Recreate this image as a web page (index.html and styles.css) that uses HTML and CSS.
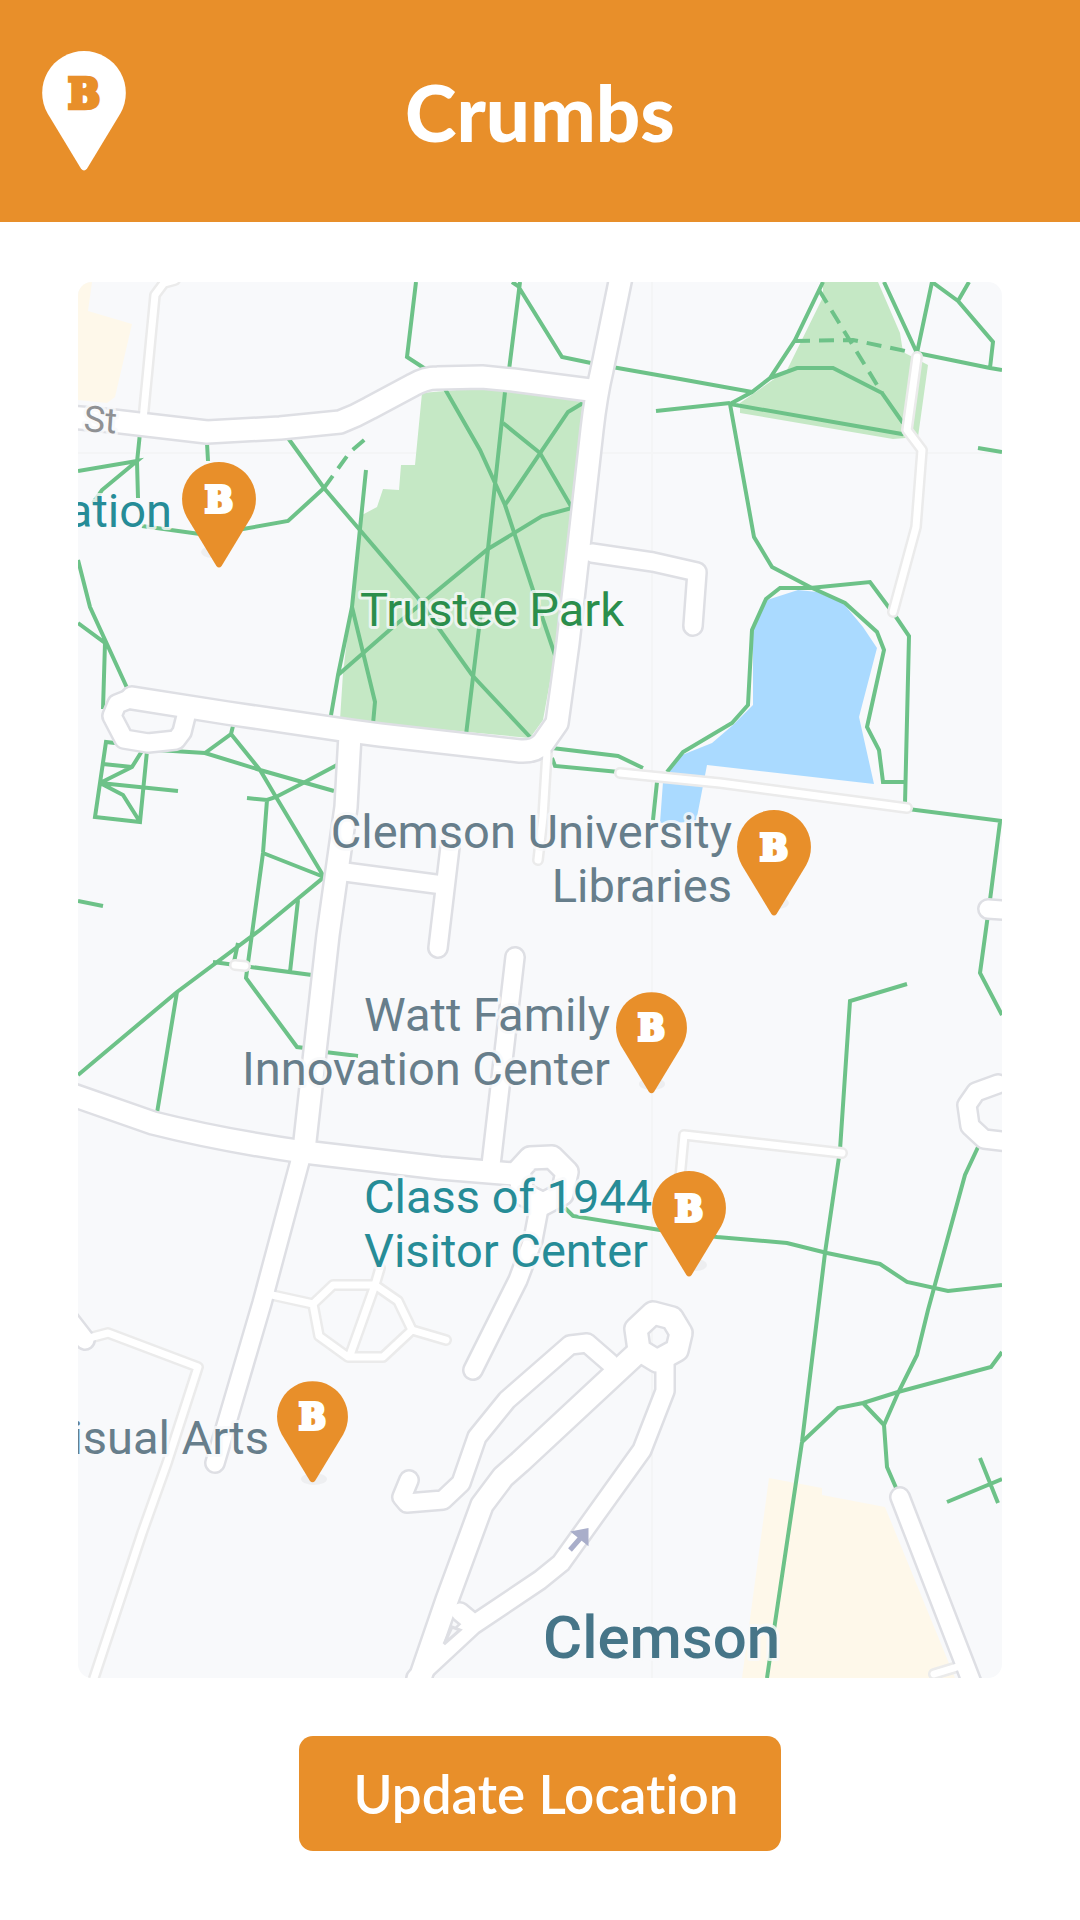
FILE: index.html
```html
<!DOCTYPE html>
<html lang="en">
<head>
    <meta charset="UTF-8">
    <meta name="viewport" content="width=device-width, initial-scale=1.0">
    <title>Crumbs</title>
    <link rel="stylesheet" href="styles.css">
</head>
<body>
    <header class="header">
        <a class="logo" href="#" aria-label="Home">
            <svg viewBox="0 0 74 106">
                <path class="logo-shape" d="M37 0a37 37 0 0 1 32 55.5L39.6 104q-2.6 3-5.2 0L5 55.5A37 37 0 0 1 37 0z"/>
                <text class="logo-letter" x="37" y="50">B</text>
            </svg>
        </a>
        <h1>Crumbs</h1>
    </header>

    <main class="content">
        <svg class="map" viewBox="78 282 924 1396" role="group" aria-label="Campus map">
            <defs>
                <symbol id="pin" viewBox="0 0 74 106">
                    <path class="pin-shape" d="M37 0a37 37 0 0 1 32 55.5L39.6 104q-2.6 3-5.2 0L5 55.5A37 37 0 0 1 37 0z"/>
                    <text class="pin-letter" x="37" y="50">B</text>
                </symbol>

                <g id="roads-wide">
                    <path d="M70 417L113 421L207 432L280 428L340 422Q356 416 370 408L413 385Q425 378 437 378L482 377L513 380L590 390"/>
                    <path d="M622 272L602 370Q596 395 592 430L580 537L568 643L557 723L543 743Q535 752 520 751L380 735L350 731L227 713L132 698"/>
                    <path d="M350 735L346 807L328 935L304 1150"/>
                    <path d="M70 1094L153 1123Q220 1140 304 1152L440 1168L513 1174"/>
                    <path d="M635 1355L520 1462L503 1477L482 1505L447 1600L416 1690"/>
                    <path d="M519 1170L530 1158L552 1157L567 1172L562 1194L543 1204L523 1194Z"/>
                    <path d="M653 1313L672 1318L681 1333L677 1350L657 1361L639 1350L636 1329Z"/>
                </g>
                <g id="roads-mid">
                    <path d="M186 716L182 732L176 740L148 743L124 739L112 716L117 704L132 698"/>
                    <path d="M303 1150L262 1303L215 1463"/>
                    <path d="M345 872L443 885M450 847L438 948"/>
                    <path d="M515 957L491 1165"/>
                    <path d="M592 553L653 562L697 572L693 626"/>
                    <path d="M540 1203L533 1240L518 1280L473 1370"/>
                    <path d="M68 1318L85 1340"/>
                    <path d="M409 1480L402 1497L407 1503L443 1500L461 1483L477 1437L507 1400L570 1345L587 1343L610 1363"/>
                    <path d="M665 1363L665 1391L642 1450L561 1563L540 1580L473 1625L416 1678"/>
                    <path d="M900 1497L974 1688"/>
                    <path d="M998 1084L976 1092L967 1105L970 1126L984 1139L1010 1142"/>
                    <path d="M988 909L1015 911"/>
                    <path d="M460 1612L472 1622"/>
                </g>
                <g id="roads-minor">
                    <path d="M175 280L164 283L155 295L143 420"/>
                    <path d="M547 752L543 817L538 860"/>
                    <path d="M620 773L720 783L907 808"/>
                    <path d="M917 357L907 430L922 450L916 527L893 612"/>
                    <path d="M678 1200L684 1135L842 1153"/>
                    <path d="M272 1295L313 1304L333 1285L375 1285L398 1301L412 1330L383 1357L348 1357L319 1336L313 1304M380 1268L375 1285L350 1355M412 1330L446 1340"/>
                    <path d="M93 1337L108 1333L198 1367L167 1463L142 1533L92 1684"/>
                    <path d="M934 1674L957 1667"/>
                    <path d="M235 965L245 966"/>
                </g>
            </defs>

            <rect class="land" x="78" y="282" width="924" height="1396"/>
            <path class="seam" d="M652 282V1678M78 453H1002"/>

            <!-- areas -->
            <path class="building" d="M78 282H92L88 311L132 324L115 397L107 403L78 400z"/>
            <path class="building" d="M769 1478L822 1488V1495L885 1507L955 1678H742z"/>
            <path class="park" d="M422 393L480 388L583 401L563 587L557 643L543 720L530 738L340 720L343 673L362 515L377 507L383 489L399 490L401 465H415z"/>
            <path class="park" d="M823 282H878L900 333L903 352L928 365L918 437L893 439L740 413V403L787 370L823 297z"/>
            <path class="water" d="M798 590L767 600L753 630V705L733 725L712 743L682 755L667 775L663 782L660 823L696 822L707 765L874 784L859 717L877 648L863 627L843 603L817 592z"/>

            <!-- foot paths -->
            <g class="paths">
                <path d="M140 433L137 462L138 498M78 471L137 461L102 490L93 503"/>
                <path d="M207 443L208 461M142 526L207 535L243 529L288 521L324 488"/>
                <path d="M288 438L324 488L418 598L440 630L472 675L530 737"/>
                <path d="M366 470L352 607L338 675L330 721M352 607L375 702L373 724"/>
                <path d="M338 675L393 627L488 549L542 516L572 508L540 453L503 423"/>
                <path d="M78 560L90 607L128 690M78 623L105 643L103 709"/>
                <path d="M416 282L407 357L427 370M512 282L518 286L562 357L591 363M520 282L509 370"/>
                <path d="M505 392L483 595L466 735M445 389L480 450L505 505L533 590L556 658M583 403L568 412L505 505"/>
                <path d="M612 367L680 379L752 392M656 411L730 403"/>
                <path d="M823 282L795 340L770 378L752 392L730 404M770 378L797 368H833L882 393L903 423M730 404L902 434L907 429"/>
                <path d="M884 282L917 353L932 282L958 301L993 342L990 368M958 301L969 282M917 353L990 368L1002 370M978 448L1002 452"/>
                <path d="M730 404L754 537L772 567L810 587L845 603L877 632L884 650L867 727L879 750L883 782H905"/>
                <path d="M667 772L683 752L732 723L748 705L752 630L766 599L780 588H810L870 582L890 609M894 614L909 636L905 804"/>
                <path d="M908 809L1002 821M1000 822L990 900L980 973L1002 1015M657 782L653 820"/>
                <path d="M552 748L618 756L643 768M552 758L555 766L619 772"/>
                <path d="M115 743L106 742L95 817L140 822L147 751H142L132 767L100 783M103 764L132 767M100 783L123 795L140 822M100 783L178 791"/>
                <path d="M157 750L205 753L260 770L334 791M205 753L231 734L233 726M231 734L260 770L276 797L324 877"/>
                <path d="M337 765L305 782L276 797L267 800L247 798M267 800L263 853L248 963L246 978L297 1047L305 1048M263 853L324 877L260 930L177 992L78 1075"/>
                <path d="M298 900L290 972M78 901L103 906M213 962L312 975M238 943L234 962M325 1052L358 1056M177 992L157 1113"/>
                <path d="M907 984L850 1001L840 1150M839 1157L825 1253L802 1442L775 1623L767 1678"/>
                <path d="M565 1208L573 1216L660 1230L717 1237L787 1243L827 1253L880 1264L907 1282L948 1291L1002 1285"/>
                <path d="M979 1145L965 1175L928 1310L917 1355L898 1393L884 1425L887 1467L897 1490"/>
                <path d="M802 1442L838 1408L863 1403L898 1392L991 1367L1002 1352M863 1403L884 1425M947 1502L1002 1479M980 1458L998 1503"/>
            </g>
            <g class="paths dashed">
                <path d="M324 488L350 452L370 435"/>
                <path d="M819 290L882 393M795 341L853 340L915 353"/>
            </g>

            <!-- roads, edges first and then the white surface -->
            <use href="#roads-minor" class="minor-edge"/>
            <use href="#roads-mid" class="mid-edge"/>
            <use href="#roads-wide" class="wide-edge"/>
            <use href="#roads-minor" class="minor-road"/>
            <use href="#roads-mid" class="mid-road"/>
            <use href="#roads-wide" class="wide-road"/>
            <path class="island" d="M452 1627L460 1630L444 1644z"/>
            <path class="arrow" d="M570 1550L584 1534M576 1533L586 1531L586 1541z"/>

            <g class="labels">
                <text class="street" x="83" y="431" transform="rotate(4 83 431)">St</text>
                <text class="visitor end" x="172" y="527">ation</text>
                <text class="green" x="360" y="626">Trustee Park</text>
                <text class="place end" x="732" y="848">Clemson University</text>
                <text class="place end" x="732" y="902">Libraries</text>
                <text class="place end" x="610" y="1031">Watt Family</text>
                <text class="place end" x="610" y="1085">Innovation Center</text>
                <text class="visitor" x="364" y="1213">Class of 1944</text>
                <text class="visitor" x="364" y="1267">Visitor Center</text>
                <text class="place end" x="269" y="1454">isual Arts</text>
                <text class="city" x="543" y="1658">Clemson</text>
            </g>

            <g class="shadows">
                <ellipse cx="212" cy="552" rx="11" ry="6"/>
                <ellipse cx="778" cy="903" rx="11" ry="6"/>
                <ellipse cx="652" cy="1084" rx="13" ry="6"/>
                <ellipse cx="696" cy="1265" rx="11" ry="6"/>
                <ellipse cx="314" cy="1479" rx="13" ry="6"/>
            </g>
            <a href="#" aria-label="Station"><use href="#pin" x="182" y="462" width="74" height="106"/></a>
            <a href="#" aria-label="Clemson University Libraries"><use href="#pin" x="737" y="810" width="74" height="106"/></a>
            <a href="#" aria-label="Watt Family Innovation Center"><use href="#pin" x="616" y="992" width="71" height="102"/></a>
            <a href="#" aria-label="Class of 1944 Visitor Center"><use href="#pin" x="652" y="1171" width="74" height="106"/></a>
            <a href="#" aria-label="Visual Arts"><use href="#pin" x="277" y="1381" width="71" height="102"/></a>
        </svg>

        <button class="update" type="button">Update Location</button>
    </main>
</body>
</html>
```
FILE: styles.css
```css
* {
    box-sizing: border-box;
}
body {
    font-family: Futura, 'Lato', sans-serif;
    margin: 0;
    background: #fff;
}
.header {
    display: grid;
    grid-template-columns: 1fr auto 1fr;
    align-items: start;
    padding: 51px 42px;
    background: #e88f2a;
    color: #fff;
}
.logo {
    width: 84px;
    height: 120px;
}
.logo svg {
    display: block;
    width: 100%;
    height: 100%;
}
.logo-shape {
    fill: #fff;
}
h1 {
    grid-column: 2;
    margin: 16px 0 0;
    font-family: Futura, 'Lato Black', 'Lato', sans-serif;
    font-size: 78px;
    font-weight: 900;
    line-height: 90px;
}
.content {
    display: flex;
    flex-direction: column;
    align-items: center;
    gap: 58px;
    padding: 60px 78px;
}
.map {
    display: block;
    width: 100%;
    border-radius: 14px;
}
.update {
    padding: 24px 42px 24px 54px;
    border: none;
    border-radius: 14px;
    background: #e88f2a;
    color: #fff;
    font-family: Futura, 'Lato Semibold', 'Lato', sans-serif;
    font-size: 53px;
    font-weight: 600;
    font-variant-ligatures: none;
    line-height: 67px;
    cursor: pointer;
}

/* map surfaces */
.land {
    fill: #f8f9fb;
}
.seam {
    stroke: #f4f5f6;
    stroke-width: 2;
}
.building {
    fill: #fef8ea;
}
.park {
    fill: #c5e8c5;
}
.water {
    fill: #aadaff;
}
.paths {
    fill: none;
    stroke: #6dc288;
    stroke-width: 4;
}
.dashed {
    stroke-dasharray: 15 9;
}

/* roads */
.wide-edge, .mid-edge, .minor-edge,
.wide-road, .mid-road, .minor-road {
    fill: none;
    stroke-linecap: round;
    stroke-linejoin: round;
}
.wide-edge, .mid-edge {
    stroke: #dedfe4;
}
.minor-edge {
    stroke: #ebebeb;
}
.wide-road, .mid-road, .minor-road {
    stroke: #fff;
}
.wide-edge {
    stroke-width: 26;
}
.wide-road {
    stroke-width: 21;
}
.mid-edge {
    stroke-width: 22;
}
.mid-road {
    stroke-width: 17;
}
.minor-edge {
    stroke-width: 12;
}
.minor-road {
    stroke-width: 7;
}
.island {
    fill: #f8f9fb;
    stroke: #dedfe4;
    stroke-width: 3;
}
.arrow {
    fill: #a9aeca;
    stroke: #a9aeca;
    stroke-width: 5;
}

/* labels */
.labels {
    font-family: 'Roboto', sans-serif;
    font-size: 47px;
    paint-order: stroke;
    stroke: #f8f9fb;
    stroke-opacity: 0.8;
    stroke-width: 6;
    stroke-linejoin: round;
}
.end {
    text-anchor: end;
}
.street {
    font-size: 36px;
    fill: #8f9194;
}
.place {
    fill: #677e8b;
}
.visitor {
    fill: #268c97;
}
.green {
    fill: #2b8e4c;
}
.city {
    font-size: 60px;
    font-weight: 500;
    fill: #467588;
}

/* pins */
.shadows {
    fill: #000;
    opacity: 0.04;
}
.pin-shape {
    fill: #e88f2a;
}
.pin-letter, .logo-letter {
    font-family: 'DejaVu Serif Condensed', 'DejaVu Serif', serif;
    font-size: 36px;
    font-weight: 700;
    text-anchor: middle;
    fill: #fff;
    stroke: #fff;
    stroke-width: 4;
}
.logo-letter {
    fill: #e88f2a;
    stroke: #e88f2a;
}
```
